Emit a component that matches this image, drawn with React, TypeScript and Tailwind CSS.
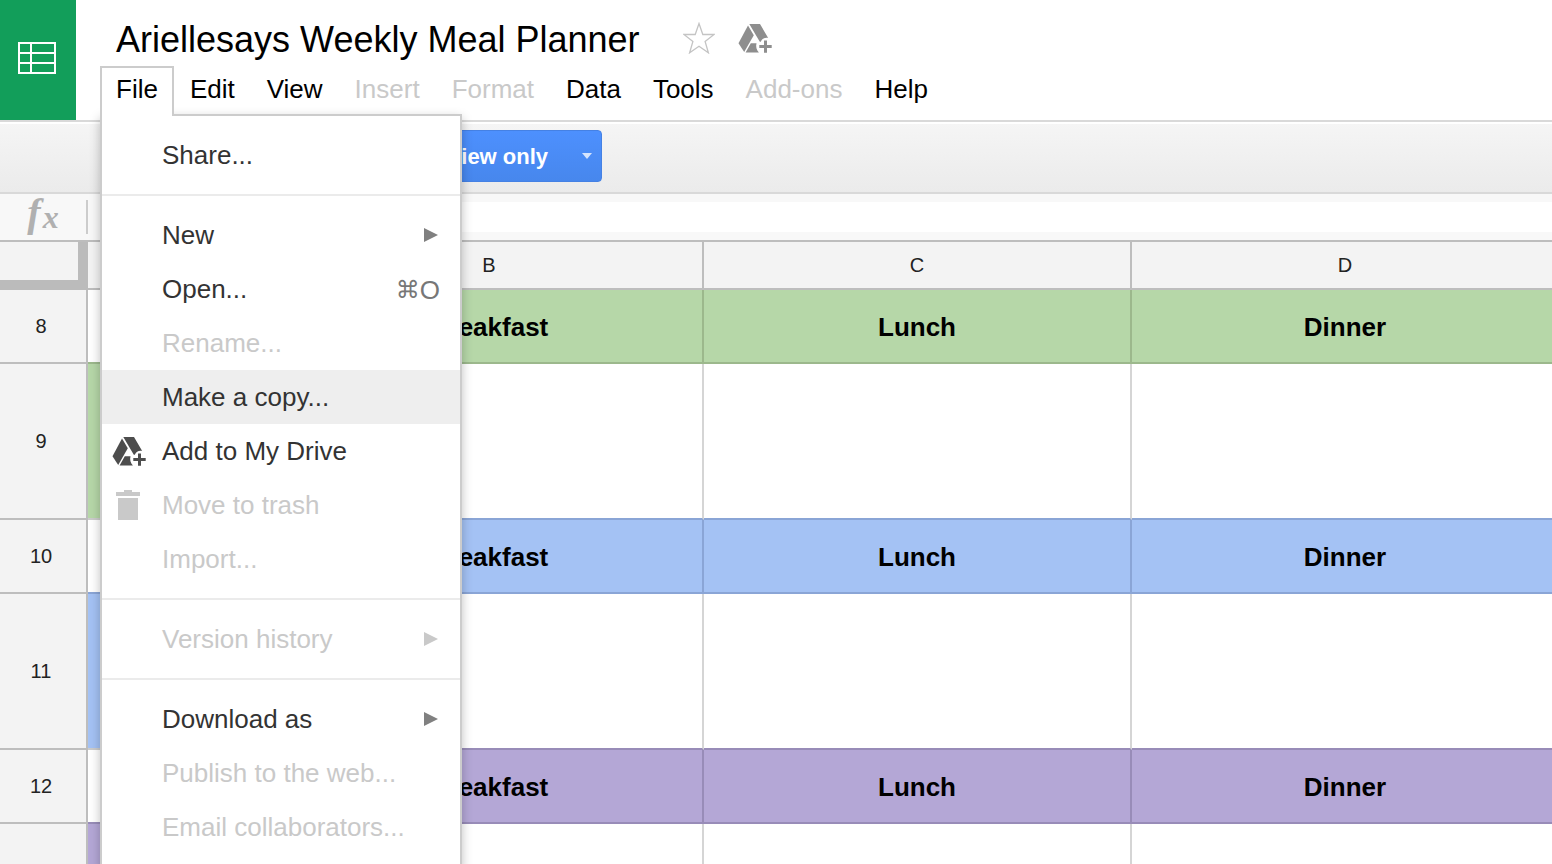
import clsx from "clsx";
import type { ReactNode } from "react";

type MenuEntry = {
  label: string;
  disabled?: boolean;
  active?: boolean;
  submenu?: boolean;
  shortcut?: string;
  icon?: ReactNode;
};

type SheetRow = {
  number: number;
  kind: "heading" | "body";
  // Fill and edge colours for the day label and the meal cells
  label: string;
  meal: string;
};

const MENUS = [
  { label: "Edit" },
  { label: "View" },
  { label: "Insert", disabled: true },
  { label: "Format", disabled: true },
  { label: "Data" },
  { label: "Tools" },
  { label: "Add-ons", disabled: true },
  { label: "Help" },
];

const FILE_MENU: MenuEntry[][] = [
  [{ label: "Share..." }],
  [
    { label: "New", submenu: true },
    { label: "Open...", shortcut: "O" },
    { label: "Rename...", disabled: true },
    { label: "Make a copy...", active: true },
    {
      label: "Add to My Drive",
      icon: <DriveAddIcon className="text-[#4d4d4d]" />,
    },
    { label: "Move to trash", disabled: true, icon: <TrashIcon /> },
    { label: "Import...", disabled: true },
  ],
  [{ label: "Version history", disabled: true, submenu: true }],
  [
    { label: "Download as", submenu: true },
    { label: "Publish to the web...", disabled: true },
    { label: "Email collaborators...", disabled: true },
  ],
];

const MEALS = ["Breakfast", "Lunch", "Dinner"];

const ROWS: SheetRow[] = [
  {
    number: 8,
    kind: "heading",
    label: "border-b-[#9cb88c] border-r-[#9cb88c]",
    meal: "bg-[#b6d7a8] border-[#9cb88c]",
  },
  {
    number: 9,
    kind: "body",
    label: "bg-[#b6d7a8] border-b-[#cccccc] border-r-[#9cb88c]",
    meal: "border-r-[#d5d5d5] border-b-[#8aa5d6]",
  },
  {
    number: 10,
    kind: "heading",
    label: "border-b-[#8aa5d6] border-r-[#8aa5d6]",
    meal: "bg-[#a4c2f4] border-[#8aa5d6]",
  },
  {
    number: 11,
    kind: "body",
    label: "bg-[#a4c2f4] border-b-[#cccccc] border-r-[#8aa5d6]",
    meal: "border-r-[#d5d5d5] border-b-[#988cb8]",
  },
  {
    number: 12,
    kind: "heading",
    label: "border-b-[#988cb8] border-r-[#988cb8]",
    meal: "bg-[#b4a7d6] border-[#988cb8]",
  },
  {
    number: 13,
    kind: "body",
    label: "bg-[#b4a7d6] border-b-[#cccccc] border-r-[#988cb8]",
    meal: "border-[#d5d5d5]",
  },
];

function SheetsIcon() {
  return (
    <svg width="38" height="32" viewBox="0 0 38 32" fill="none" stroke="white" strokeWidth="2">
      <path d="M1 1h36v30H1zM1 11h36M1 21h36M13 1v30" />
    </svg>
  );
}

function StarIcon() {
  return (
    <svg width="32" height="32" viewBox="0 0 32 32" fill="none" stroke="#c4c4c4" strokeWidth="1.3">
      <path d="M16 1.5l3.800 11h11.300l-9 7 3.300 11.300L16 24.200l-9.400 6.600L9.900 19.500l-9-7h11.300z" />
    </svg>
  );
}

function DriveAddIcon({ className }: { className?: string }) {
  return (
    <svg className={className} width="34" height="31" viewBox="0 0 34 31" fill="currentColor">
      <path d="M10 2.500L15.800 12.300 6.200 29 .5 20.300z" />
      <path d="M11.300 1h10.700l8.200 14c-3.400-.8-6 .8-7.400 3.800h-1z" />
      <path d="M12.800 20.300h5.700c-.9 3.400 0 6.700 2.400 9.200H7.600z" />
      <path d="M26 17.500h3V22h4.700v3H29v4.700h-3V25h-4.700v-3H26z" />
    </svg>
  );
}

function TrashIcon() {
  return (
    <svg className="ml-1" width="24" height="30" viewBox="0 0 24 30" fill="#c9c9c9">
      <path d="M8 0h8v2h8v4H0V2h8zM2 8h20v22H2z" />
    </svg>
  );
}

function FileMenuItem({ entry }: { entry: MenuEntry }) {
  return (
    <button
      type="button"
      role="menuitem"
      disabled={entry.disabled}
      className={clsx(
        "flex h-[54px] w-full items-center pr-5 text-left text-[26px]",
        entry.disabled ? "text-[#c9c9c9]" : "text-[#333333]",
        entry.active && "bg-[#eeeeee]",
      )}
    >
      <span className="w-[60px] shrink-0 pl-[10px]">{entry.icon}</span>
      <span className="flex-1 whitespace-nowrap">{entry.label}</span>
      {entry.shortcut && (
        <span className="flex items-center pt-[2px] text-[#777777]">
          <span className="font-['DejaVu_Sans',sans-serif] text-[24px]">⌘</span>
          {entry.shortcut}
        </span>
      )}
      {entry.submenu && (
        <svg
          width="16"
          height="14"
          viewBox="0 0 16 14"
          className={entry.disabled ? "text-[#c9c9c9]" : "text-[#808080]"}
          fill="currentColor"
        >
          <path d="M0 0l14 7-14 7z" />
        </svg>
      )}
    </button>
  );
}

function FileMenu() {
  return (
    <div className="relative">
      <button
        type="button"
        aria-expanded="true"
        className="relative z-20 flex h-[50px] items-center border-2 border-b-0 border-[#cccccc] bg-white px-[14px] pb-[6px]"
      >
        File
      </button>
      <div
        role="menu"
        className="absolute top-[48px] left-0 z-10 w-[362px] border-2 border-[#cccccc] bg-white py-3 shadow-[0_4px_10px_rgba(0,0,0,0.25)]"
      >
        {FILE_MENU.map((group, i) => (
          <div key={group[0].label}>
            {i > 0 && <hr className="my-3 border-t-2 border-[#ebebeb]" />}
            {group.map((entry) => (
              <FileMenuItem key={entry.label} entry={entry} />
            ))}
          </div>
        ))}
      </div>
    </div>
  );
}

function Header() {
  return (
    <header className="relative z-10 flex shrink-0 border-b-2 border-[#d9d9d9] bg-white">
      <a
        href="#"
        aria-label="Sheets home"
        className="flex h-[120px] w-[76px] shrink-0 items-center bg-[#129e5a] pb-1 pl-[18px]"
      >
        <SheetsIcon />
      </a>
      <div className="pl-6">
        <div className="flex h-[66px] items-center pt-3 pl-4">
          <h1 className="pt-[2px] text-[36px] leading-[54px] whitespace-nowrap">
            Ariellesays Weekly Meal Planner
          </h1>
          <button type="button" aria-label="Star" className="ml-[43px] pb-[2px]">
            <StarIcon />
          </button>
          <button type="button" aria-label="Add to My Drive" className="ml-[23px] pb-[2px]">
            <DriveAddIcon className="text-[#8e8e8e]" />
          </button>
        </div>
        <nav className="flex text-[26px]">
          <FileMenu />
          {MENUS.map((menu) => (
            <button
              key={menu.label}
              type="button"
              disabled={menu.disabled}
              className="flex h-[50px] items-center px-4 pb-1 whitespace-nowrap disabled:text-[#c9c9c9]"
            >
              {menu.label}
            </button>
          ))}
        </nav>
      </div>
    </header>
  );
}

function Toolbar() {
  return (
    <div className="flex h-[72px] shrink-0 items-center border-t-2 border-b-2 border-t-white border-b-[#d9d9d9] bg-linear-to-b from-[#f5f5f5] to-[#ebebeb] pb-1 pl-[400px]">
      <button
        type="button"
        className="flex h-[52px] items-center rounded-[4px] border border-[#4581e4] bg-linear-to-b from-[#4d90fe] to-[#4787ed] pr-[9px] pl-[46px] text-[22px] font-bold text-white"
      >
        View only
        <svg className="ml-[34px]" width="10" height="6" viewBox="0 0 10 6" fill="#d5e4fd">
          <path d="M0 0h10L5 6z" />
        </svg>
      </button>
    </div>
  );
}

function FormulaBar() {
  return (
    <div className="flex h-12 shrink-0 items-center border-b-2 border-[#bdbdbd] bg-[#f8f8f8]">
      <label
        htmlFor="formula"
        className="flex h-[34px] w-[88px] items-center justify-center border-r-2 border-[#cccccc] pb-2 font-['Liberation_Serif',serif] text-[40px] leading-none text-[#b0b0b0] italic"
      >
        <span className="pr-[2px] font-bold">f</span>
        <span className="pt-2 text-[32px] font-bold">x</span>
      </label>
      <input
        id="formula"
        type="text"
        readOnly
        className="ml-4 h-[30px] min-w-0 flex-1 bg-white px-2 text-[24px] outline-none"
      />
    </div>
  );
}

function Sheet() {
  return (
    <main className="min-h-0 flex-1 overflow-hidden">
      <table className="w-[1560px] min-w-full table-fixed border-separate border-spacing-0">
        <colgroup>
          <col className="w-[88px]" />
          <col className="w-[188px]" />
          <col />
          <col />
          <col />
        </colgroup>
        <thead>
          <tr className="h-12 text-[20px] text-[#222222]">
            <td className="border-r-[10px] border-b-[10px] border-[#bbbbbb] bg-[#f3f3f3]" />
            {["A", "B", "C", "D"].map((column) => (
              <th
                key={column}
                scope="col"
                className="border-r-2 border-b-2 border-[#bdbdbd] bg-[#f3f3f3] p-0 font-normal"
              >
                {column}
              </th>
            ))}
          </tr>
        </thead>
        <tbody>
          {ROWS.map((row) => (
            <tr key={row.number} className={row.kind === "heading" ? "h-[74px]" : "h-[156px]"}>
              <th
                scope="row"
                className="border-r-2 border-b-2 border-[#bdbdbd] bg-[#f3f3f3] p-0 pr-1 text-[20px] font-normal text-[#222222]"
              >
                {row.number}
              </th>
              <td className={clsx("border-r-2 border-b-2", row.label)} />
              {MEALS.map((meal) => (
                <td
                  key={meal}
                  className={clsx(
                    "border-r-2 border-b-2 p-0 pt-[2px] text-center text-[26px] font-bold",
                    row.meal,
                  )}
                >
                  {row.kind === "heading" && meal}
                </td>
              ))}
            </tr>
          ))}
        </tbody>
      </table>
    </main>
  );
}

export default function App() {
  return (
    <div className="flex h-screen flex-col overflow-hidden bg-white font-['Liberation_Sans',Arial,sans-serif] text-black">
      <Header />
      <Toolbar />
      <FormulaBar />
      <Sheet />
    </div>
  );
}
